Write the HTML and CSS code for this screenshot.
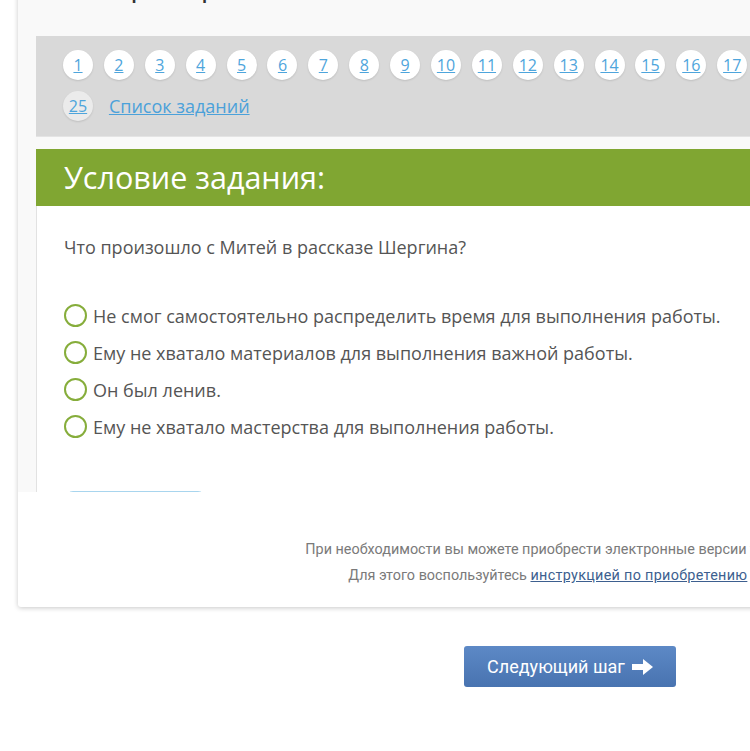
FILE: index.html
```html
<!DOCTYPE html>
<html lang="ru">
<head>
  <meta charset="UTF-8" />
  <meta name="viewport" content="width=device-width, initial-scale=1.0" />
  <title>Самопроверка</title>
  <link rel="stylesheet" href="styles.css">
</head>
<body>
  <div class="page">
    <div class="card">
      <div class="task-area">
        <h1 class="task-title">Самопроверка</h1>

        <!-- Task navigation -->
        <nav class="task-nav">
          <ul class="task-list">
            <li><a href="#">1</a></li>
            <li><a href="#">2</a></li>
            <li><a href="#">3</a></li>
            <li><a href="#">4</a></li>
            <li><a href="#">5</a></li>
            <li><a href="#">6</a></li>
            <li><a href="#">7</a></li>
            <li><a href="#">8</a></li>
            <li><a href="#">9</a></li>
            <li><a href="#">10</a></li>
            <li><a href="#">11</a></li>
            <li><a href="#">12</a></li>
            <li><a href="#">13</a></li>
            <li><a href="#">14</a></li>
            <li><a href="#">15</a></li>
            <li><a href="#">16</a></li>
            <li><a href="#">17</a></li>
            <li><a href="#">18</a></li>
            <li><a href="#">19</a></li>
            <li><a href="#">20</a></li>
            <li><a href="#">21</a></li>
            <li><a href="#">22</a></li>
            <li><a href="#">23</a></li>
            <li><a href="#">24</a></li>
            <li class="current"><a href="#">25</a></li>
            <li class="all-tasks"><a href="#">Список заданий</a></li>
          </ul>
        </nav>

        <!-- Task body -->
        <div class="task-box">
          <div class="task-head">Условие задания:</div>
          <div class="task-body">
            <p class="question">Что произошло с Митей в рассказе Шергина?</p>
            <ul class="answers">
              <li><span class="radio"></span>Не смог самостоятельно распределить время для выполнения работы.</li>
              <li><span class="radio"></span>Ему не хватало материалов для выполнения важной работы.</li>
              <li><span class="radio"></span>Он был ленив.</li>
              <li><span class="radio"></span>Ему не хватало мастерства для выполнения работы.</li>
            </ul>
            <button class="check-button">Ответить</button>
          </div>
        </div>
      </div>

      <div class="card-footer">
        <p>При необходимости вы можете приобрести электронные версии учебников.</p>
        <p>Для этого воспользуйтесь <a href="#">инструкцией по приобретению</a> ЭФУ.</p>
      </div>
    </div>

    <div class="actions">
      <button class="next-button">Следующий шаг
        <svg class="arrow" width="21" height="16" viewBox="0 0 21 16">
          <polygon points="0,5 11,5 11,0 21,8 11,16 11,11 0,11" fill="#fff" />
        </svg>
      </button>
    </div>
  </div>
</body>
</html>
```

FILE: styles.css
```css
/* Reset & Global Styles */
* {
  margin: 0;
  padding: 0;
  box-sizing: border-box;
}
html {
  overflow-x: hidden;
}
body {
  background: #fff;
  color: #555;
  font-family: 'Open Sans', 'Noto Sans', sans-serif;
  font-size: 18px;
}
.page {
  width: 1140px;
  margin-top: -40px;
}
/* Card */
.card {
  margin: 0 18px;
  background: #fff;
  border-radius: 3px;
  box-shadow: 0 1px 5px rgba(0, 0, 0, 0.22);
  overflow: hidden;
}
.task-area {
  height: 532px;
  overflow: hidden;
  background: #f9f9f9;
  padding: 0 18px;
}
.task-title {
  margin: 5px 0 31px;
  font-size: 30px;
  line-height: 40px;
  font-weight: 400;
  color: #333;
}
/* Navigation panel */
.task-nav {
  background: #d9d9d9;
  padding: 14px 27px 15px;
  border-bottom: 1px solid #e4e4e4;
}
.task-list {
  list-style: none;
  display: flex;
  flex-wrap: wrap;
  align-items: center;
  max-width: 1000px;
  column-gap: 10.9px;
  row-gap: 11px;
}
.task-list li a {
  display: flex;
  align-items: center;
  justify-content: center;
  width: 30px;
  height: 30px;
  border-radius: 50%;
  background: #fff;
  box-shadow: 0 1px 2px rgba(0, 0, 0, 0.12);
  color: #4ea5dc;
  font-size: 16px;
}
.task-list li.current a {
  background: #ebebeb;
}
.task-list li.all-tasks {
  margin-left: 5px;
}
.task-list li.all-tasks a {
  width: auto;
  height: auto;
  background: none;
  box-shadow: none;
  border-radius: 0;
  font-size: 18px;
  color: #4ba1da;
}
/* Task box */
.task-box {
  margin-top: 12px;
}
.task-head {
  background: #80a632;
  color: #fff;
  font-size: 30.5px;
  height: 57px;
  line-height: 57px;
  padding-left: 28px;
}
.task-body {
  background: #fff;
  border-left: 1px solid #e2e2e2;
  padding: 28px 27px 0;
  height: 400px;
}
.question {
  line-height: 26px;
}
.answers {
  list-style: none;
  margin-top: 37px;
}
.answers li {
  display: flex;
  align-items: center;
  height: 37px;
}
.radio {
  width: 23px;
  height: 23px;
  border: 2px solid #86ad3b;
  border-radius: 50%;
  margin-right: 6px;
  flex-shrink: 0;
}
.check-button {
  margin: 46px 0 0 1px;
  width: 141px;
  height: 40px;
  border: 1px solid #a8d5ee;
  border-radius: 8px;
  background: #fff;
  color: #4ba1da;
  font: inherit;
}
/* Card footer */
.card-footer {
  padding: 45px 10px 18px 0;
  text-align: center;
  font-family: Roboto, 'Liberation Sans', sans-serif;
  font-size: 14.4px;
  line-height: 26px;
  color: #7a7a7a;
}
.card-footer a {
  color: #3d5f8f;
  letter-spacing: 0.3px;
}
/* Next step */
.actions {
  display: flex;
  justify-content: center;
  padding: 39px 0 60px;
}
.next-button {
  display: flex;
  align-items: center;
  gap: 7px;
  width: 212px;
  height: 41px;
  justify-content: center;
  border: none;
  border-radius: 3px;
  background: linear-gradient(#5d89c6, #4873b0);
  color: #fff;
  font-family: Roboto, 'Liberation Sans', sans-serif;
  font-size: 18px;
  cursor: pointer;
}
```
